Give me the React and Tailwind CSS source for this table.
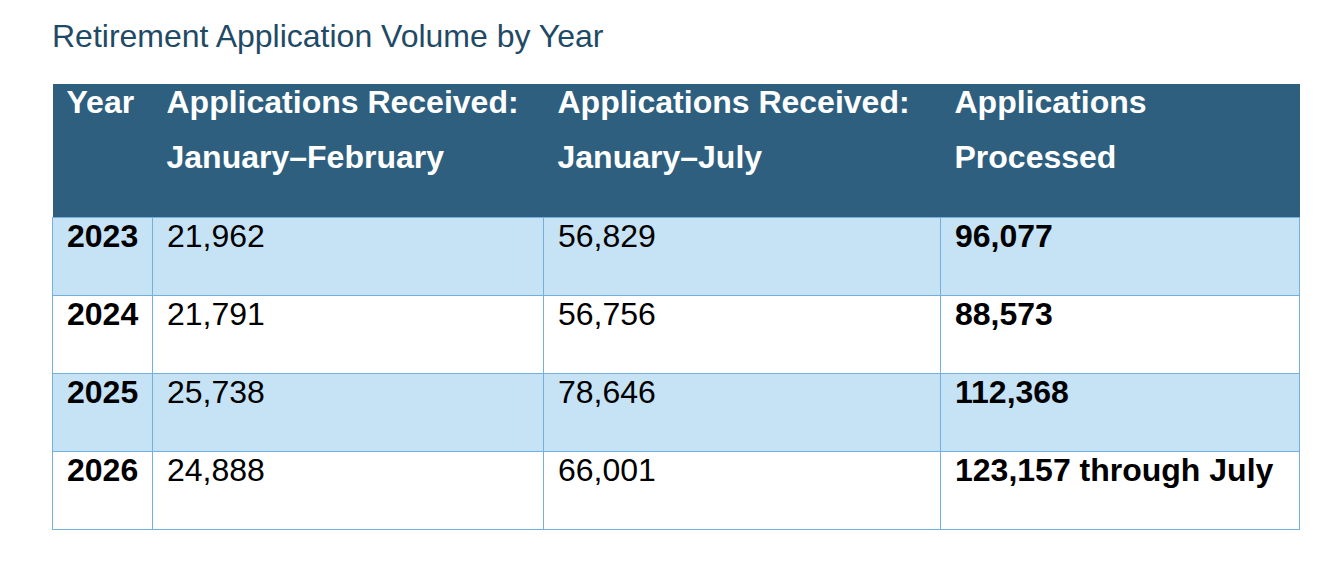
export default function App() {
  const rows = [
    { year: "2023", febr: "21,962", july: "56,829", processed: "96,077" },
    { year: "2024", febr: "21,791", july: "56,756", processed: "88,573" },
    { year: "2025", febr: "25,738", july: "78,646", processed: "112,368" },
    { year: "2026", febr: "24,888", july: "66,001", processed: "123,157 through July" },
  ];

  const headers = [
    ["Applications Received:", "January–February"],
    ["Applications Received:", "January–July"],
    ["Applications", "Processed"],
  ];

  return (
    <div
      className="min-h-[582px] bg-white pl-[52px] pt-[18px]"
      style={{ fontFamily: '"Liberation Sans", Arial, sans-serif' }}
    >
      <h2 className="text-[32px] leading-[37px] font-normal text-[#1f4a66]">
        Retirement Application Volume by Year
      </h2>

      <table className="mt-[29px] w-[1247px] table-fixed border-collapse text-left text-[32px] leading-[37px]">
        <colgroup>
          <col className="w-[100px]" />
          <col className="w-[391px]" />
          <col className="w-[397px]" />
          <col className="w-[359px]" />
        </colgroup>
        <thead>
          <tr className="h-[133px] bg-[#2e5f7f] text-white">
            <th className="align-top pl-[14px] pr-0 font-bold">Year</th>
            {headers.map((h, i) => (
              <th key={i} className="align-top pl-[14px] pr-0 font-bold">
                <div>{h[0]}</div>
                <div className="mt-[18px]">{h[1]}</div>
              </th>
            ))}
          </tr>
        </thead>
        <tbody className="text-black">
          {rows.map((r, i) => (
            <tr
              key={r.year}
              className={`h-[78px] ${i % 2 === 0 ? "bg-[#c6e2f5]" : "bg-white"}`}
            >
              <td className="align-top border border-[#74b0de] pl-[14px] font-bold">
                {r.year}
              </td>
              <td className="align-top border border-[#74b0de] pl-[14px]">{r.febr}</td>
              <td className="align-top border border-[#74b0de] pl-[14px]">{r.july}</td>
              <td className="align-top border border-[#74b0de] pl-[14px] font-bold whitespace-nowrap">
                {r.processed}
              </td>
            </tr>
          ))}
        </tbody>
      </table>
    </div>
  );
}
